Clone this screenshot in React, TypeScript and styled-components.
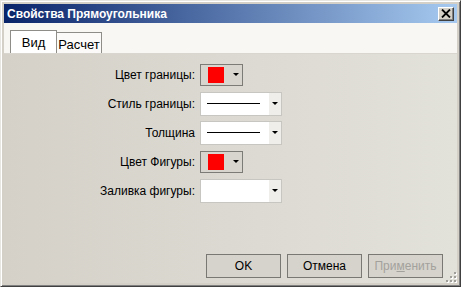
import styled, { createGlobalStyle } from 'styled-components';

const GlobalStyle = createGlobalStyle`
  html, body {
    margin: 0;
    padding: 0;
    background: #d4d0c8;
  }
  body {
    font-family: 'Liberation Sans', 'DejaVu Sans', sans-serif;
    font-size: 12px;
  }
`;

const Window = styled.div`
  width: 461px;
  height: 287px;
  box-sizing: border-box;
  display: flex;
  flex-direction: column;
  padding: 3px;
  background: #d4d0c8;
  border-top: 1px solid #e8e6e0;
  border-left: 1px solid #e8e6e0;
  border-right: 1px solid #404040;
  border-bottom: 1px solid #404040;
  box-shadow: inset 1px 1px 0 #ffffff, inset -1px -1px 0 #808080;
`;

const TitleBar = styled.div`
  height: 19px;
  flex: none;
  display: flex;
  align-items: center;
  justify-content: space-between;
  padding: 0 3px;
  background: linear-gradient(to right, #0a246a, #a6caf0);
`;

const Title = styled.span`
  color: #fff;
  font-weight: bold;
  font-size: 12px;
  font-family: 'Liberation Sans', sans-serif;
`;

const CloseButton = styled.div`
  width: 16px;
  height: 14px;
  box-sizing: border-box;
  display: flex;
  align-items: center;
  justify-content: center;
  background: #d4d0c8;
  border-top: 1px solid #fff;
  border-left: 1px solid #fff;
  border-right: 1px solid #404040;
  border-bottom: 1px solid #404040;
  box-shadow: inset -1px -1px 0 #808080;
`;

const TabStrip = styled.div`
  height: 30px;
  flex: none;
  display: flex;
  align-items: flex-end;
  padding-left: 6px;
  background: #f8f7f3;
  border-bottom: 1px solid #d8d6cf;
`;

const Tab = styled.div<{ $active?: boolean }>`
  box-sizing: border-box;
  height: ${(p) => (p.$active ? 23 : 21)}px;
  width: ${(p) => (p.$active ? 47 : 45)}px;
  display: flex;
  align-items: center;
  justify-content: center;
  padding-top: ${(p) => (p.$active ? 0 : 2)}px;
  background: ${(p) => (p.$active ? '#ffffff' : '#fbfaf8')};
  border: 1px solid #8f8d88;
  border-bottom: none;
  border-left-width: ${(p) => (p.$active ? 1 : 0)}px;
  color: #000;
  font-size: 13px;
`;

const Body = styled.div`
  flex: 1;
  display: flex;
  flex-direction: column;
  background: linear-gradient(to right, #d5d1c9, #e2e1da);
`;

const Form = styled.div`
  display: grid;
  grid-template-columns: 191px auto;
  grid-auto-rows: 29px;
  column-gap: 5px;
  align-items: center;
  align-content: start;
  padding-top: 6px;
  flex: 1;
`;

const Label = styled.span`
  text-align: right;
  color: #000;
  font-size: 12px;
`;

const ColorPicker = styled.div`
  width: 43px;
  height: 22px;
  box-sizing: border-box;
  display: flex;
  align-items: center;
  gap: 9px;
  padding-left: 7px;
  background: #d8d5cf;
  border: 1px solid #7d7b76;
`;

const Swatch = styled.div<{ $color: string }>`
  width: 16px;
  height: 16px;
  background: ${(p) => p.$color};
`;

const Combo = styled.div`
  width: 82px;
  height: 24px;
  box-sizing: border-box;
  display: flex;
  background: #fff;
  border: 1px solid #c8c6c0;
`;

const ComboValue = styled.div`
  flex: 1;
  display: flex;
  align-items: center;
  padding: 0 9px 0 6px;
`;

const LineSample = styled.div`
  flex: 1;
  height: 1px;
  background: #000;
`;

const ComboArrow = styled.div`
  width: 12px;
  display: flex;
  align-items: center;
  justify-content: center;
  background: #efeeea;
`;

const Arrow = styled.div`
  width: 0;
  height: 0;
  border-left: 3px solid transparent;
  border-right: 3px solid transparent;
  border-top: 3px solid #000;
`;

const Footer = styled.div`
  display: flex;
  justify-content: flex-end;
  gap: 6px;
  padding: 0 14px 5px 0;
  position: relative;
`;

const Button = styled.div<{ $disabled?: boolean }>`
  width: 75px;
  height: 24px;
  box-sizing: border-box;
  display: flex;
  align-items: center;
  justify-content: center;
  background: #d6d3cc;
  border: 1px solid #7a7873;
  color: ${(p) => (p.$disabled ? '#a3a19c' : '#000')};
  font-size: 12px;
`;

const Underline = styled.span`
  text-decoration: underline;
`;

const Grip = styled.svg`
  position: absolute;
  right: 0;
  bottom: 0;
`;

function ColorField({ color }: { color: string }) {
  return (
    <ColorPicker>
      <Swatch $color={color} />
      <Arrow />
    </ColorPicker>
  );
}

function ComboField({ line }: { line?: boolean }) {
  return (
    <Combo>
      <ComboValue>{line && <LineSample />}</ComboValue>
      <ComboArrow>
        <Arrow />
      </ComboArrow>
    </Combo>
  );
}

export default function App() {
  return (
    <>
      <GlobalStyle />
      <Window>
        <TitleBar>
          <Title>Свойства Прямоугольника</Title>
          <CloseButton>
            <svg width="10" height="9" viewBox="0 0 10 9">
              <path d="M1 0.5 L9 8.5 M9 0.5 L1 8.5" stroke="#000" strokeWidth="1.8" />
            </svg>
          </CloseButton>
        </TitleBar>
        <TabStrip>
          <Tab $active>Вид</Tab>
          <Tab>Расчет</Tab>
        </TabStrip>
        <Body>
          <Form>
            <Label>Цвет границы:</Label>
            <ColorField color="#ff0000" />
            <Label>Стиль границы:</Label>
            <ComboField line />
            <Label>Толщина</Label>
            <ComboField line />
            <Label>Цвет Фигуры:</Label>
            <ColorField color="#ff0000" />
            <Label>Заливка фигуры:</Label>
            <ComboField />
          </Form>
          <Footer>
            <Button>OK</Button>
            <Button>Отмена</Button>
            <Button $disabled>
              При<Underline>м</Underline>енить
            </Button>
            <Grip width="12" height="12" viewBox="0 0 12 12">
              {[
                [9, 1],
                [9, 5],
                [5, 5],
                [9, 9],
                [5, 9],
                [1, 9],
              ].map(([x, y]) => (
                <g key={`${x}-${y}`}>
                  <rect x={x + 1} y={y + 1} width="2" height="2" fill="#fff" />
                  <rect x={x} y={y} width="2" height="2" fill="#a09e98" />
                </g>
              ))}
            </Grip>
          </Footer>
        </Body>
      </Window>
    </>
  );
}
